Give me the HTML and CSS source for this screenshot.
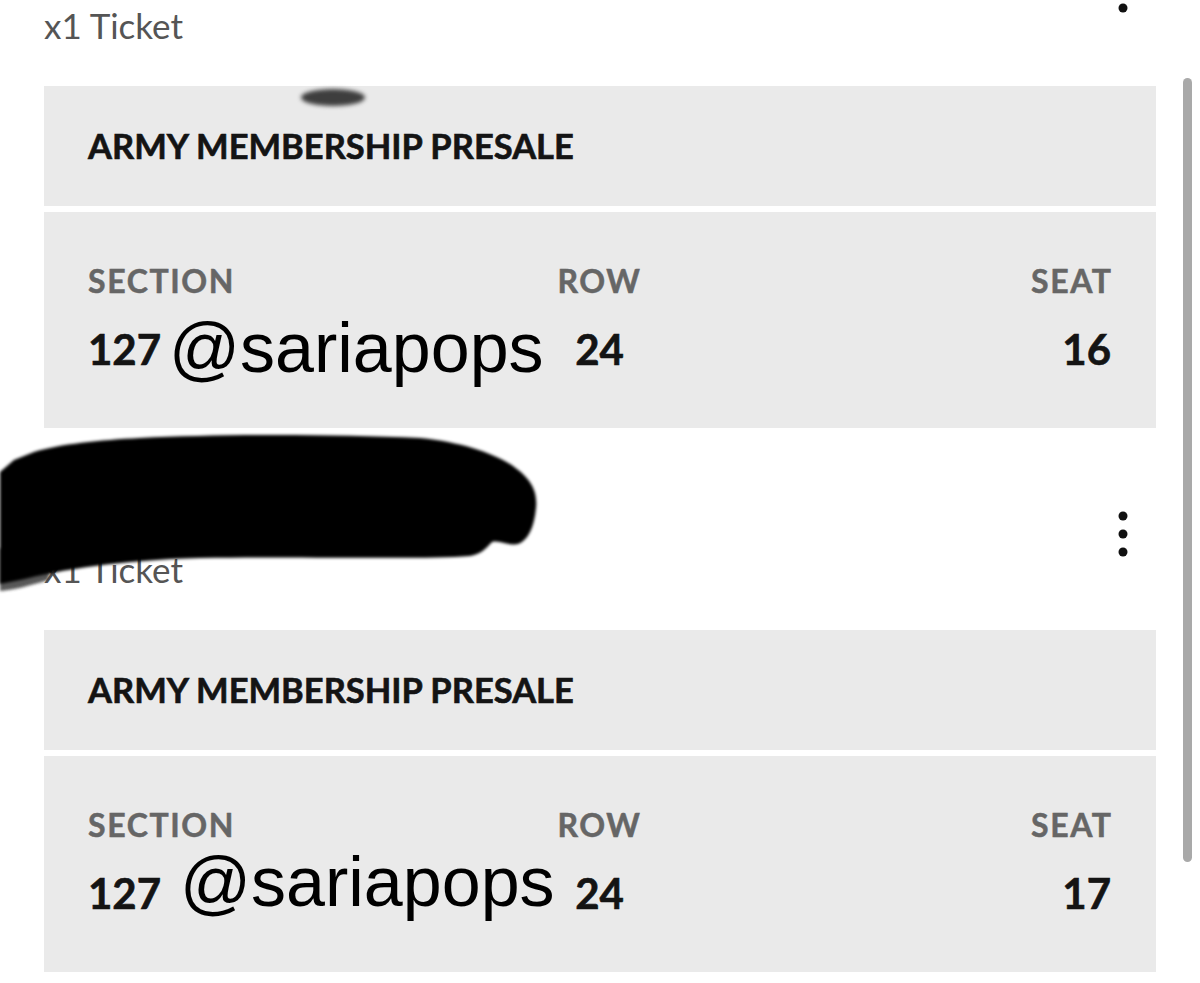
FILE: index.html
```html
<!DOCTYPE html>
<html lang="en">
<head>
  <meta charset="UTF-8">
  <title>My Tickets</title>
  <link rel="stylesheet" href="styles.css">
</head>
<body>

<div class="ticket-list">

  <section class="ticket-group">
    <div class="group-head">
      <div class="event-title"></div>
      <button class="more" aria-label="More options">
        <svg width="10" height="46" viewBox="0 0 10 46"><circle cx="5" cy="5" r="4.5"/><circle cx="5" cy="23" r="4.5"/><circle cx="5" cy="41" r="4.5"/></svg>
      </button>
    </div>
    <p class="qty">x1 Ticket</p>
    <div class="ticket-card offer">
      <span class="smudge"></span>
      <h3>ARMY MEMBERSHIP PRESALE</h3>
    </div>
    <div class="ticket-card seats">
      <div class="seat-col">
        <span class="label">SECTION</span>
        <span class="value">127</span>
      </div>
      <div class="seat-col mid">
        <span class="label">ROW</span>
        <span class="value">24</span>
      </div>
      <div class="seat-col right">
        <span class="label">SEAT</span>
        <span class="value">16</span>
      </div>
      <span class="watermark wm-one">@sariapops</span>
    </div>
  </section>

  <section class="ticket-group">
    <div class="group-head">
      <div class="event-title"></div>
      <button class="more" aria-label="More options">
        <svg width="10" height="46" viewBox="0 0 10 46"><circle cx="5" cy="5" r="4.5"/><circle cx="5" cy="23" r="4.5"/><circle cx="5" cy="41" r="4.5"/></svg>
      </button>
    </div>
    <p class="qty">x1 Ticket</p>
    <div class="ticket-card offer">
      <h3>ARMY MEMBERSHIP PRESALE</h3>
    </div>
    <div class="ticket-card seats">
      <div class="seat-col">
        <span class="label">SECTION</span>
        <span class="value">127</span>
      </div>
      <div class="seat-col mid">
        <span class="label">ROW</span>
        <span class="value">24</span>
      </div>
      <div class="seat-col right">
        <span class="label">SEAT</span>
        <span class="value">17</span>
      </div>
      <span class="watermark wm-two">@sariapops</span>
    </div>

    <!-- marker scribble over the event name -->
    <svg class="redact" width="545" height="165" viewBox="0 0 545 165">
      <defs>
        <filter id="soft"><feGaussianBlur stdDeviation="1.6"/></filter>
      </defs>
      <path filter="url(#soft)" fill="#3a3a3a" opacity="0.85" d="M0,118 C20,122 40,126 52,130 L48,150 C30,156 12,160 0,161 Z"/>
      <path filter="url(#soft)" fill="#000" d="M0,42 L14,30 L34,22 C60,14 100,10 140,8 C220,4 330,4 420,8 C460,12 490,22 510,34 C528,46 538,58 536,78 C534,98 528,110 518,114 C508,116 500,110 492,112 C486,118 482,124 470,126 C420,130 300,126 200,128 C120,130 60,140 20,150 L0,154 Z"/>
    </svg>
  </section>

</div>

<div class="scrollbar"></div>

</body>
</html>
```

FILE: styles.css
```css
body {
  margin: 0;
  background-color: #ffffff;
  font-family: 'Lato', 'Noto Sans', sans-serif;
  color: #141414;
  overflow: hidden;
  height: 983px;
}
.ticket-list {
  margin-top: -27px;
  padding: 0 44px;
}
.ticket-group {
  position: relative;
  margin-bottom: 89px;
}
.group-head {
  height: 34px;
  display: flex;
  align-items: center;
  justify-content: space-between;
}
.more {
  background: none;
  border: none;
  padding: 0;
  margin-right: 28px;
  display: flex;
  cursor: pointer;
}
.more svg {
  fill: #111;
}
.qty {
  margin: 0 0 43px;
  font-size: 35px;
  line-height: 36px;
  color: #555555;
}
.ticket-card {
  position: relative;
  background-color: #eaeaea;
}
.offer {
  height: 120px;
  box-sizing: border-box;
  padding: 39px 44px;
  margin-bottom: 6px;
}
.offer h3 {
  margin: 0;
  font-size: 34.5px;
  line-height: 42px;
  font-weight: 700;
  color: #141414;
  -webkit-text-stroke: 0.6px #141414;
}
.smudge {
  position: absolute;
  left: 257px;
  top: 3px;
  width: 64px;
  height: 17px;
  border-radius: 50%;
  background-color: #3e3e3e;
  filter: blur(2px);
}
.seats {
  height: 216px;
  box-sizing: border-box;
  padding: 50px 45px 0 44px;
  display: grid;
  grid-template-columns: 1fr auto 1fr;
}
.seat-col {
  display: flex;
  flex-direction: column;
  align-items: flex-start;
}
.seat-col.mid {
  align-items: center;
}
.seat-col.right {
  align-items: flex-end;
}
.label {
  font-size: 32px;
  line-height: 38px;
  font-weight: 700;
  color: #666666;
  letter-spacing: 1.6px;
  -webkit-text-stroke: 0.5px #666666;
}
.right .label {
  margin-right: -1.6px;
}
.value {
  margin-top: 24px;
  font-size: 42px;
  line-height: 50px;
  font-weight: 700;
  color: #141414;
  -webkit-text-stroke: 0.6px #141414;
}
.watermark {
  position: absolute;
  font-family: 'Liberation Sans', Arial, sans-serif;
  font-size: 70px;
  line-height: 70px;
  color: #000;
  white-space: nowrap;
}
.wm-one {
  left: 125px;
  top: 101px;
}
.wm-two {
  left: 136px;
  top: 91px;
}
.redact {
  position: absolute;
  left: -44px;
  top: -87px;
}
.scrollbar {
  position: fixed;
  left: 1183px;
  top: 78px;
  width: 9px;
  height: 784px;
  border-radius: 5px;
  background-color: #a9a9a9;
}
```
